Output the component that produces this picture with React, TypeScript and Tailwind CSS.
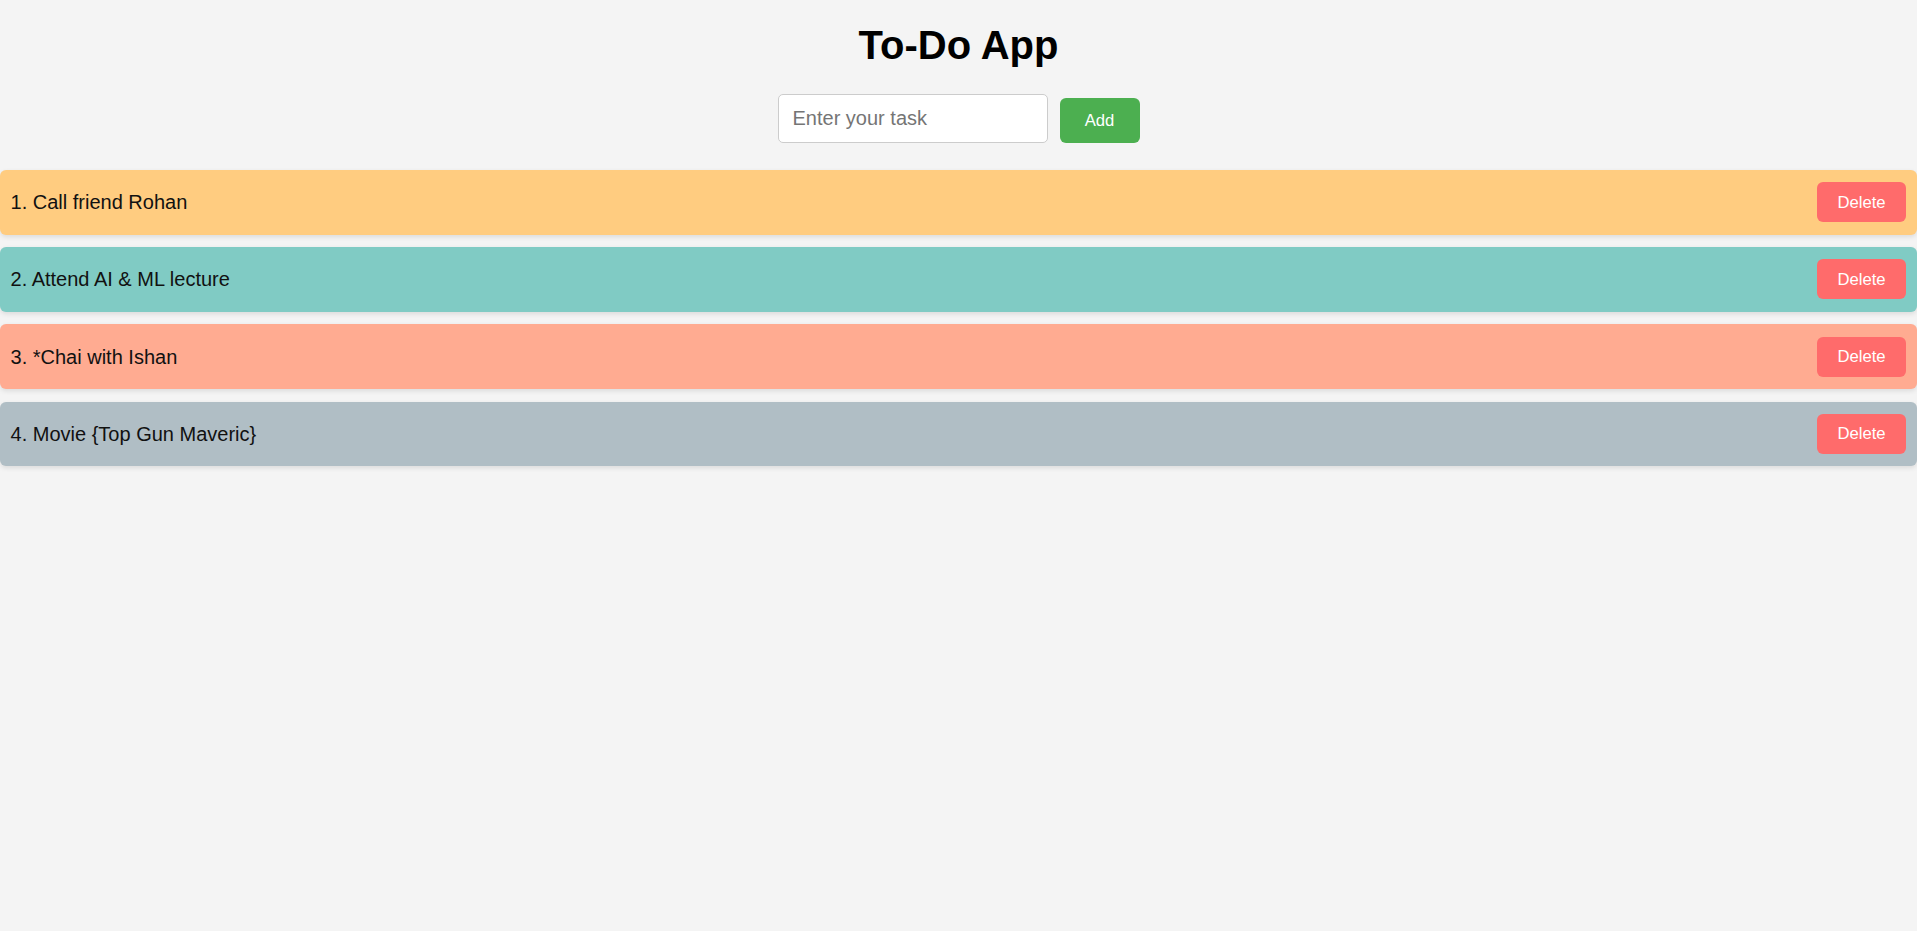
import React, { useState } from "react";

type Task = { id: number; text: string; color: string };

const initialTasks: Task[] = [
  { id: 1, text: "Call friend Rohan", color: "bg-[#ffcc80]" },
  { id: 2, text: "Attend AI & ML lecture", color: "bg-[#80cbc4]" },
  { id: 3, text: "*Chai with Ishan", color: "bg-[#ffab91]" },
  { id: 4, text: "Movie {Top Gun Maveric}", color: "bg-[#b0bec5]" },
];

export default function App() {
  const [tasks, setTasks] = useState<Task[]>(initialTasks);
  const [value, setValue] = useState("");

  const addTask = () => {
    if (!value.trim()) return;
    const colors = ["bg-[#ffcc80]", "bg-[#80cbc4]", "bg-[#ffab91]", "bg-[#b0bec5]"];
    setTasks([
      ...tasks,
      { id: Date.now(), text: value.trim(), color: colors[tasks.length % colors.length] },
    ]);
    setValue("");
  };

  return (
    <div className="min-h-[931px] bg-[#f4f4f4] pt-[22px] font-['Liberation_Sans',Arial,sans-serif] text-black">
      <h1 className="text-center text-[40px] font-bold leading-[46px]">To-Do App</h1>

      <div className="mt-[26px] flex items-start justify-center gap-[12px]">
        <input
          value={value}
          onChange={(e) => setValue(e.target.value)}
          placeholder="Enter your task"
          className="h-[49px] w-[270px] rounded-[5px] border border-[#cccccc] bg-white px-[14px] text-[20px] text-black placeholder:text-[#757575] focus:outline-none"
        />
        <button
          type="button"
          onClick={addTask}
          className="mt-[4px] h-[45px] w-[80px] rounded-[6px] bg-[#4caf50] text-[16.67px] text-white"
        >
          Add
        </button>
      </div>

      <ul className="mt-[27px] flex flex-col gap-[12.7px]">
        {tasks.map((t, i) => (
          <li
            key={t.id}
            className={`flex h-[64.5px] items-center justify-between rounded-[6px] pl-[10.5px] pr-[11px] shadow-[0_2px_5px_rgba(0,0,0,0.1)] ${t.color}`}
          >
            <span className="text-[20px] text-[#111]">
              {i + 1}. {t.text}
            </span>
            <button
              type="button"
              onClick={() => setTasks(tasks.filter((x) => x.id !== t.id))}
              className="h-[40px] w-[89px] rounded-[6px] bg-[#ff6b6b] text-[16.67px] text-white"
            >
              Delete
            </button>
          </li>
        ))}
      </ul>
    </div>
  );
}
